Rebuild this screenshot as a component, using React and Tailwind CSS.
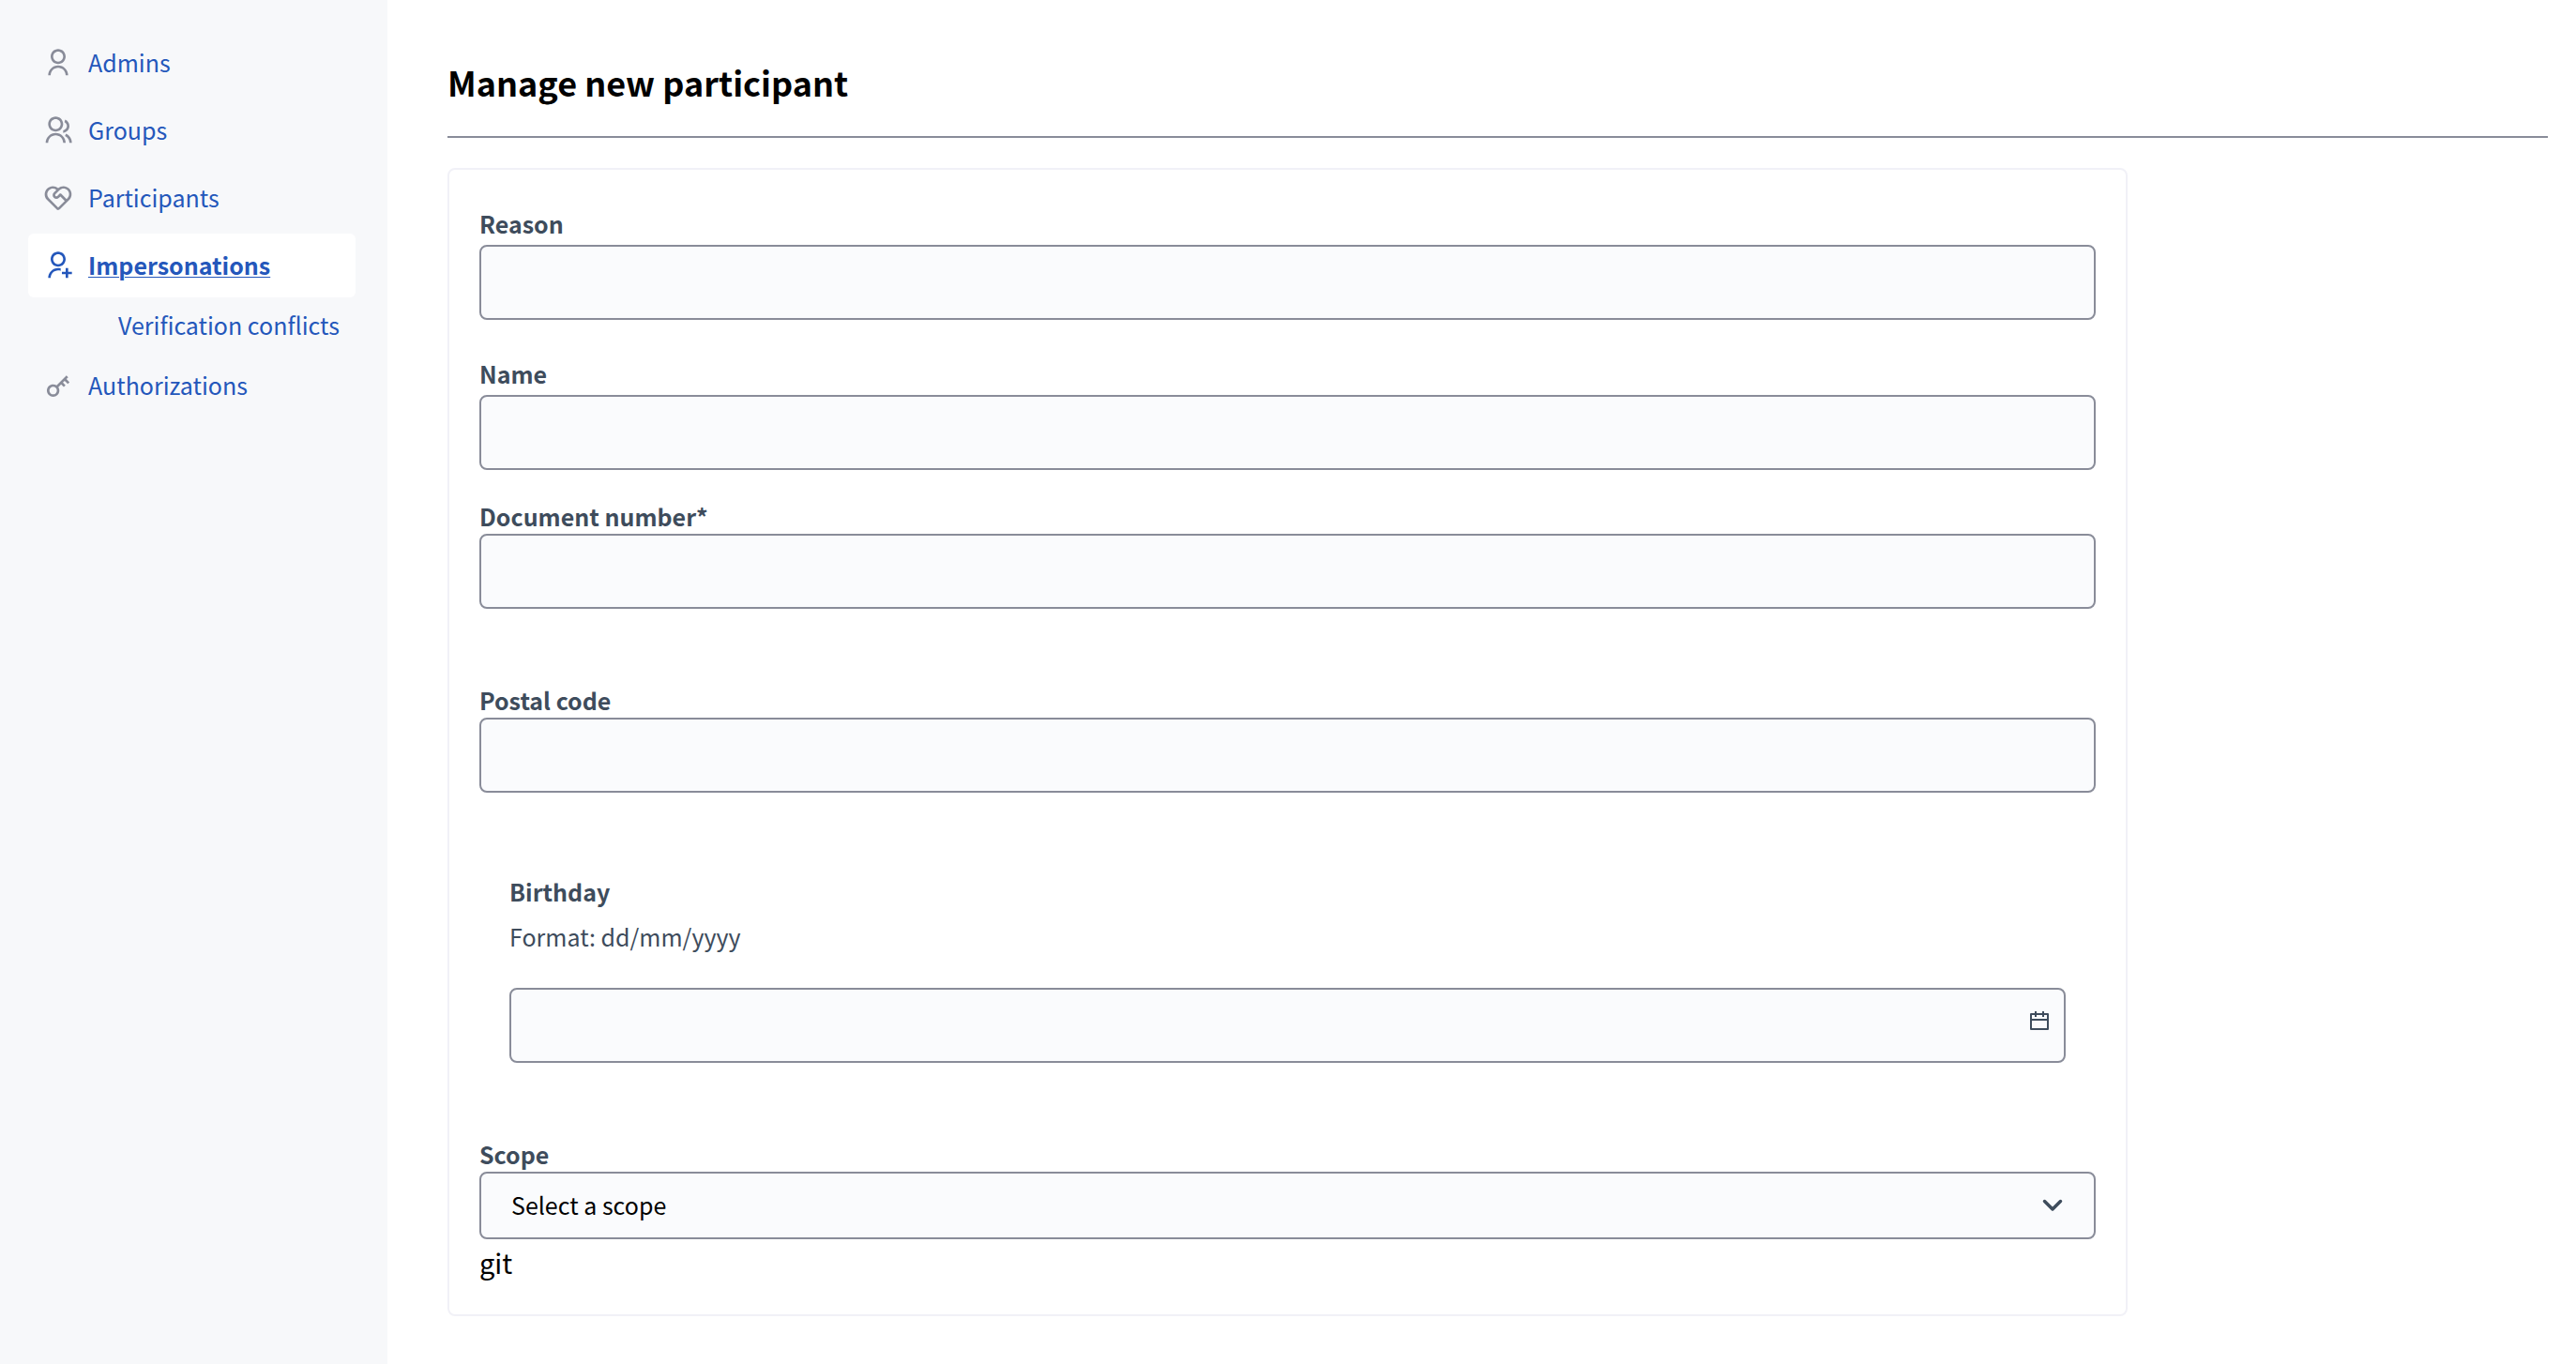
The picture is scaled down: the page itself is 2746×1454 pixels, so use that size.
import { RiUserLine, RiGroupLine, RiServiceLine, RiUserAddLine, RiKey2Line } from "react-icons/ri";

const INPUT =
  "block w-full h-20 rounded-lg border-2 border-[#898c99] bg-[#fafbfd] px-8 text-[25px] text-black outline-none";
const LABEL = "block text-[25px] leading-[34px] font-bold text-[#3e4c5c]";

function NavItem({ icon: Icon, label, active }) {
  return (
    <li>
      <a
        href="#"
        aria-current={active ? "page" : undefined}
        className={
          active
            ? "flex h-[68px] items-center gap-4 rounded-md bg-white px-4 font-bold text-[#2457bb] underline decoration-1 underline-offset-2"
            : "flex h-[68px] items-center gap-4 rounded-md px-4 text-[#2457bb]"
        }
      >
        <Icon className={active ? "size-8 text-[#2457bb]" : "size-8 text-[#898c99]"} />
        <span>{label}</span>
      </a>
    </li>
  );
}

function Sidebar() {
  return (
    <nav className="w-[413px] shrink-0 bg-[#f7f8fa] pt-[33px] pr-[34px] pl-[30px] text-[25px]">
      <ul className="flex flex-col gap-1">
        <NavItem icon={RiUserLine} label="Admins" />
        <NavItem icon={RiGroupLine} label="Groups" />
        <NavItem icon={RiServiceLine} label="Participants" />
        <NavItem icon={RiUserAddLine} label="Impersonations" active />
        <li>
          <a href="#" className="flex h-[52px] items-center pl-24 whitespace-nowrap text-[#2457bb]">
            Verification conflicts
          </a>
        </li>
        <NavItem icon={RiKey2Line} label="Authorizations" />
      </ul>
    </nav>
  );
}

function Field({ id, label, className, inputClass }) {
  return (
    <div className={className}>
      <label htmlFor={id} className={LABEL}>
        {label}
      </label>
      <div className={inputClass}>
        <input id={id} type="text" className={INPUT} />
      </div>
    </div>
  );
}

function CalendarIcon() {
  return (
    <svg viewBox="0 0 20 20" className="size-5" fill="none" stroke="currentColor" strokeWidth="2" aria-hidden="true">
      <path d="M1 3H19V19H1ZM1 9H19M6 0V6M14 0V6" strokeLinejoin="round" />
    </svg>
  );
}

export default function App() {
  return (
    <div className="flex min-h-screen bg-white font-['Noto_Sans_CJK_SC',sans-serif]">
      <Sidebar />
      <main className="min-w-0 flex-1 pt-[63px] pr-[30px] pb-12 pl-16">
        <h1 className="border-b-2 border-[#898c99] pb-[34px] text-[36px] leading-[48px] font-bold text-black">
          Manage new participant
        </h1>
        <form className="mt-8 w-4/5 rounded-lg border-2 border-[#f1f1f7] px-8 pt-10 pb-8">
          <Field id="reason" label="Reason" inputClass="mt-1.5" />
          <Field id="name" label="Name" className="mt-10" inputClass="mt-1.5" />
          <Field id="document" label="Document number*" className="mt-8" inputClass="mt-0.5" />
          <Field id="postal" label="Postal code" className="mt-20" inputClass="mt-0.5" />

          <div className="mt-[88px] px-8">
            <label htmlFor="birthday" className={LABEL}>
              Birthday
            </label>
            <p id="birthday-help" className="mt-3.5 text-[25px] leading-[34px] text-[#3e4c5c]">
              Format: dd/mm/yyyy
            </p>
            <div className="relative mt-[38px]">
              <input id="birthday" type="text" aria-describedby="birthday-help" className={INPUT} />
              <button
                type="button"
                aria-label="Open calendar"
                className="absolute top-[25px] right-[18px] text-[#3e4c5c]"
              >
                <CalendarIcon />
              </button>
            </div>
          </div>

          <div className="mt-20">
            <label htmlFor="scope" className={LABEL}>
              Scope
            </label>
            <div className="relative mt-0.5">
              <select
                id="scope"
                className="block h-[72px] w-full appearance-none rounded-lg border-2 border-[#898c99] bg-[#fafbfd] px-8 text-[25px] text-black outline-none"
              >
                <option>Select a scope</option>
              </select>
              <svg
                viewBox="0 0 24 24"
                className="pointer-events-none absolute top-6 right-[34px] size-6 text-[#3e4c5c]"
                fill="none"
                stroke="currentColor"
                strokeWidth="3.5"
                strokeLinecap="round"
                strokeLinejoin="round"
                aria-hidden="true"
              >
                <path d="M3.5 7.5L12 16L20.5 7.5" />
              </svg>
            </div>
          </div>
          <p className="text-[29px] leading-[48px] text-black">git</p>
        </form>
      </main>
    </div>
  );
}
